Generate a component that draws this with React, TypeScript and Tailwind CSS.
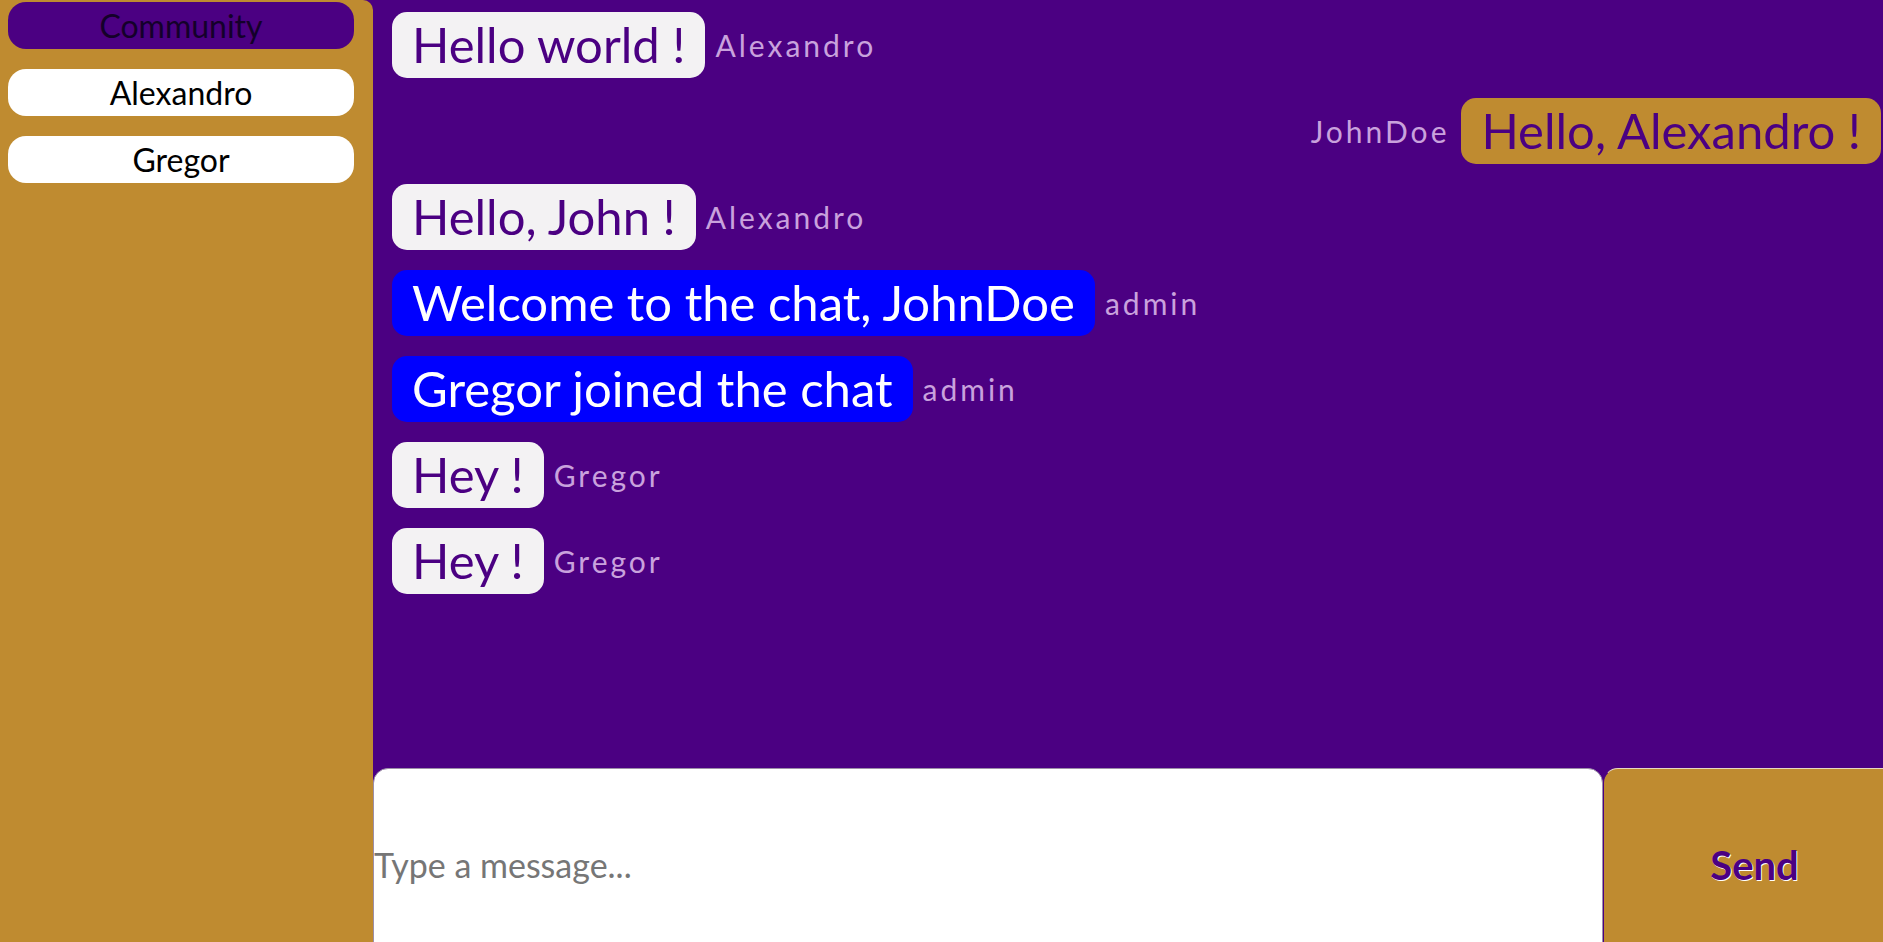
const messages = [
  { id: 1, text: 'Hello world !', user: 'Alexandro', kind: 'other' },
  { id: 2, text: 'Hello, Alexandro !', user: 'JohnDoe', kind: 'me' },
  { id: 3, text: 'Hello, John !', user: 'Alexandro', kind: 'other' },
  { id: 4, text: 'Welcome to the chat, JohnDoe', user: 'admin', kind: 'admin' },
  { id: 5, text: 'Gregor joined the chat', user: 'admin', kind: 'admin' },
  { id: 6, text: 'Hey !', user: 'Gregor', kind: 'other' },
  { id: 7, text: 'Hey !', user: 'Gregor', kind: 'other' },
];

const users = ['Alexandro', 'Gregor'];

export default function App() {
  return (
    <div className="flex h-screen w-screen overflow-hidden bg-[#4b0082] font-['Lato',sans-serif]">
      {/* Sidebar */}
      <aside className="w-[373px] shrink-0 rounded-tr-[10px] bg-[#bf8b30] pl-2 pr-[19px] pt-[2px] flex flex-col gap-[20px]">
        <div className="h-[47px] rounded-[18px] bg-[#4b0082] flex items-center justify-center text-[32px] text-[#14002a]">
          Community
        </div>
        {users.map((u) => (
          <div
            key={u}
            className="h-[47px] rounded-[18px] bg-white flex items-center justify-center text-[32px] text-black"
          >
            {u}
          </div>
        ))}
      </aside>

      {/* Chat */}
      <main className="w-[1533px] shrink-0 h-[958px] flex flex-col">
        <div className="flex-1 flex flex-col gap-[20px] pl-[19px] pr-[25px] pt-[12px]">
          {messages.map((m) =>
            m.kind === 'me' ? (
              <div key={m.id} className="flex items-center justify-end gap-[12px]">
                <span className="text-[30px] tracking-[3px] text-[#c9a2dd]">{m.user}</span>
                <div className="h-[66px] rounded-[15px] bg-[#bf8b30] px-[20px] flex items-center text-[49px] text-[#4b0082]">
                  {m.text}
                </div>
              </div>
            ) : (
              <div key={m.id} className="flex items-center gap-[10px]">
                <div
                  className={
                    m.kind === 'admin'
                      ? 'h-[66px] rounded-[15px] bg-[#0000ff] px-[20px] flex items-center text-[49px] text-white'
                      : 'h-[66px] rounded-[15px] bg-[#f3f2f3] px-[20px] flex items-center text-[49px] text-[#4b0082]'
                  }
                >
                  {m.text}
                </div>
                <span className="text-[30px] tracking-[3px] text-[#c9a2dd]">{m.user}</span>
              </div>
            )
          )}
        </div>

        {/* Composer */}
        <div className="h-[190px] shrink-0 flex">
          <input
            type="text"
            placeholder="Type a message..."
            className="flex-1 min-w-0 rounded-t-[15px] border border-[#9c8fa8] bg-white text-[34px] text-black placeholder:text-[#767676] outline-none pt-[2px]"
          />
          <button className="w-[303px] shrink-0 rounded-tl-[15px] border border-[#4b0082] border-t-[#e8d8c0] bg-[#bf8b30] text-[40px] font-bold text-[#4b0082] [text-shadow:1px_1px_0_#fff] pt-[4px]">
            Send
          </button>
        </div>
      </main>
    </div>
  );
}
